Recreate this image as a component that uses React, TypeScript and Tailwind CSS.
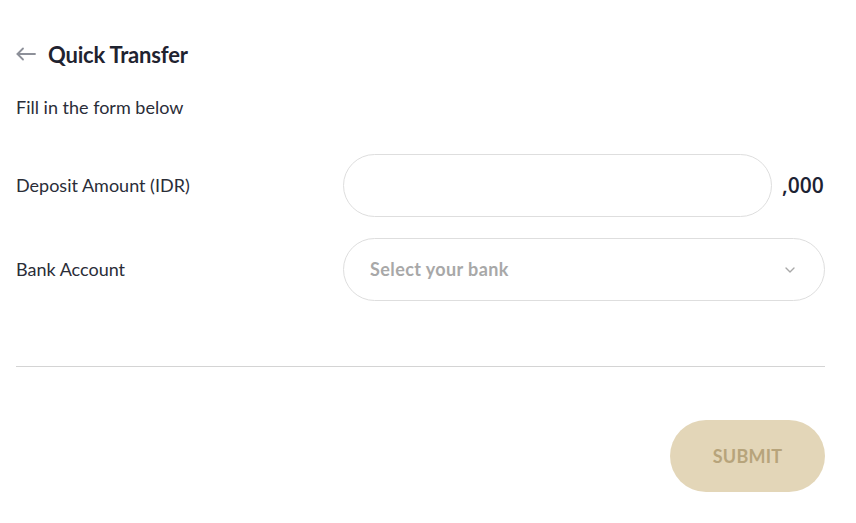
import { ChevronDown } from 'lucide-react';

function BackArrow() {
  return (
    <svg width="20" height="14" viewBox="0 0 20 14" fill="none" stroke="#8d9099" strokeWidth="1.8" strokeLinecap="round" strokeLinejoin="round">
      <path d="M19 7H1.5" />
      <path d="M7 1.5L1.5 7L7 12.5" />
    </svg>
  );
}

export default function App() {
  return (
    <div className="min-h-screen bg-white font-['Lato',sans-serif] text-[#1f2330]">
      <div className="w-[809px] ml-4 pt-[38px]">
        {/* Header */}
        <div className="flex items-center gap-[12px] h-8">
          <BackArrow />
          <h1 className="text-[22px] font-bold tracking-[-0.2px]">Quick Transfer</h1>
        </div>

        <p className="mt-[24px] text-[18px] leading-[27px] text-[#2a2d38]">Fill in the form below</p>

        {/* Deposit amount */}
        <div className="mt-[33px] flex items-center">
          <label className="w-[327px] text-[18px] text-[#2a2d38]">Deposit Amount (IDR)</label>
          <input
            type="text"
            className="w-[429px] h-[63px] rounded-full border border-[#dedede] px-6 outline-none"
          />
          <span className="ml-[10px] font-['Open_Sans',sans-serif] text-[21px] font-semibold text-[#1c2233]">,000</span>
        </div>

        {/* Bank account */}
        <div className="mt-[21px] flex items-center">
          <label className="w-[327px] text-[18px] text-[#2a2d38]">Bank Account</label>
          <button className="flex-1 h-[63px] rounded-full border border-[#dedede] pl-[26px] pr-[26px] flex items-center justify-between">
            <span className="text-[18px] font-bold text-[#a8a8a8] tracking-[0.4px]">Select your bank</span>
            <ChevronDown className="w-4 h-4 text-[#a8a8a8]" strokeWidth={2} />
          </button>
        </div>

        <div className="mt-[65px] border-t border-[#d4d4d4]" />

        <div className="mt-[53px] flex justify-end">
          <button className="w-[155px] h-[72px] rounded-full bg-[#e3d6b8] text-[18px] font-bold text-[#b7a47b] tracking-[0.2px]">
            SUBMIT
          </button>
        </div>
      </div>
    </div>
  );
}
